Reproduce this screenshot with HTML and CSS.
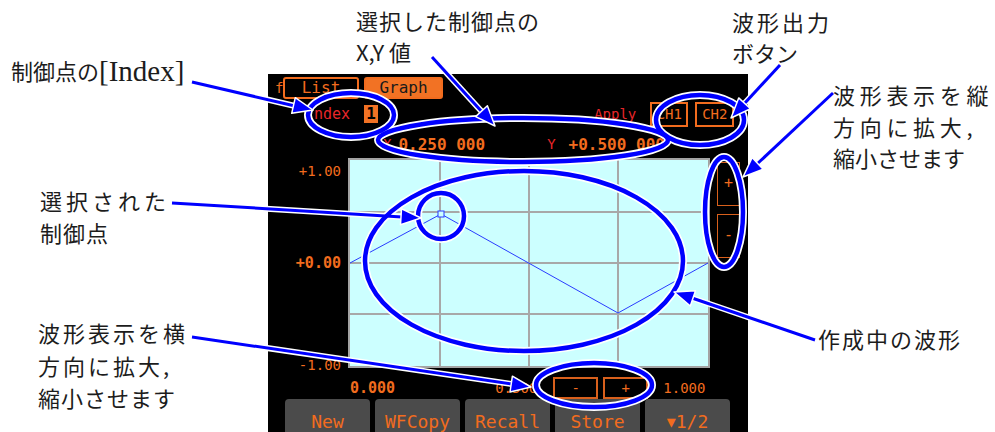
FILE: index.html
```html
<!DOCTYPE html>
<html lang="ja">
<head>
  <meta charset="UTF-8">
  <title>任意波形の編集 - Graph</title>
  <link rel="stylesheet" href="styles.css">
</head>
<body>

  <div class="page">

    <div class="screen">
      <div class="tabs">
        <span class="tab-edge">f</span>
        <span class="tab">List</span>
        <span class="tab active">Graph</span>
      </div>

      <div class="index-row">
        <span class="red idx-lbl">Index</span>
        <span class="idx-box">1</span>
        <span class="red apply">Apply</span>
        <span class="ch ch1">CH1</span>
        <span class="ch ch2">CH2</span>
      </div>

      <div class="values">
        <span class="red x-lbl">X</span>
        <span class="val x-val">0.250 000</span>
        <span class="red y-lbl">Y</span>
        <span class="val y-val">+0.500 000</span>
      </div>

      <div class="plot-row">
        <div class="yaxis">
          <span class="y-top">+1.00</span>
          <span class="y-mid">+0.00</span>
          <span class="y-bot">-1.00</span>
        </div>
        <div class="plot">
          <svg width="358" height="206" viewBox="0 0 358 206">
            <g class="grid">
              <line x1="90" y1="0" x2="90" y2="206"/>
              <line x1="179" y1="0" x2="179" y2="206"/>
              <line x1="268" y1="0" x2="268" y2="206"/>
              <line x1="0" y1="52" x2="358" y2="52"/>
              <line x1="0" y1="103" x2="358" y2="103"/>
              <line x1="0" y1="154" x2="358" y2="154"/>
            </g>
            <polyline class="wave" points="0,103 91,54 268,153 358,103"/>
            <rect class="point" x="88" y="51" width="6" height="6"/>
          </svg>
        </div>
        <div class="zoom-v">
          <span class="zbtn">+</span>
          <span class="zbtn">-</span>
        </div>
      </div>

      <div class="xaxis">
        <span class="x-start">0.000</span>
        <span class="x-mid">0.500</span>
        <span class="hbtn minus">-</span>
        <span class="hbtn plus">+</span>
        <span class="x-end">1.000</span>
      </div>

      <div class="softkeys">
        <span class="key">New</span>
        <span class="key">WFCopy</span>
        <span class="key">Recall</span>
        <span class="key">Store</span>
        <span class="key"><small>&#9660;</small>1/2</span>
      </div>
    </div>

    <!-- callout labels -->
    <div class="note n-index">制御点の<span class="serif">[Index]</span></div>
    <div class="note n-xy"><span class="sp1">選択した制御点の</span><br>X,Y 値</div>
    <div class="note n-out"><span class="sp3">波形出力</span><br>ボタン</div>
    <div class="note n-vert"><span class="sp5">波形表示を縦</span><br><span class="sp5">方向に拡大,</span><br>縮小させます</div>
    <div class="note n-sel"><span class="sp4">選択された</span><br><span class="sp1">制御点</span></div>
    <div class="note n-wave"><span class="sp2">作成中の波形</span></div>
    <div class="note n-horz"><span class="sp3">波形表示を横</span><br><span class="sp3">方向に拡大,</span><br><span class="sp1">縮小させます</span></div>

    <!-- rings and arrows drawn over the screen -->
    <svg class="marks" width="995" height="432" viewBox="0 0 995 432">
      <defs>
        <g id="rings">
          <ellipse cx="351" cy="115" rx="43" ry="22"/>
          <ellipse cx="523" cy="140" rx="145" ry="22"/>
          <ellipse cx="700" cy="120" rx="44" ry="25"/>
          <ellipse cx="724" cy="212" rx="19" ry="55"/>
          <ellipse cx="524" cy="261" rx="159" ry="90"/>
          <circle cx="441" cy="216" r="23"/>
          <ellipse cx="594" cy="385" rx="58" ry="22"/>
        </g>
        <g id="leads">
          <line x1="192" y1="82" x2="295" y2="106"/>
          <line x1="432" y1="57" x2="483" y2="113"/>
          <line x1="780" y1="65" x2="744" y2="104"/>
          <line x1="833" y1="93" x2="757" y2="164"/>
          <line x1="172" y1="203" x2="402" y2="217"/>
          <line x1="815" y1="340" x2="692" y2="298"/>
          <line x1="192" y1="337" x2="512" y2="384"/>
        </g>
      </defs>
      <use href="#rings" class="ring-halo"/>
      <use href="#leads" class="lead-halo"/>
      <use href="#rings" class="ring"/>
      <use href="#leads" class="lead"/>
      <g class="heads">
        <polygon points="313,110 291.7,113.3 295.3,97.7"/>
        <polygon points="495,126 475.6,116.6 487.4,105.8"/>
        <polygon points="731,118 738.7,97.9 750.5,108.7"/>
        <polygon points="743,177 752.1,157.6 763.1,169.2"/>
        <polygon points="421,218 400.5,224.8 401.5,208.8"/>
        <polygon points="674,292 695.5,290.8 690.3,306"/>
        <polygon points="531,387 510,392 512.4,376.2"/>
      </g>
    </svg>

  </div>

</body>
</html>
```

FILE: styles.css
```css
body {
  margin: 0;
  background-color: #ffffff;
}
.page {
  position: relative;
  width: 995px;
  height: 432px;
  overflow: hidden;
  background-color: #ffffff;
}

/* ---- instrument screen ---- */
.screen {
  margin-left: 268px;
  padding-top: 74px;
  width: 480px;
  height: 358px;
  box-sizing: content-box;
  font-family: "DejaVu Sans Mono", "Liberation Mono", monospace;
  color: #f26c1e;
  background: linear-gradient(#ffffff 0, #ffffff 74px, #000000 74px);
}
.red {
  color: #e8262a;
}

.tabs {
  display: flex;
  align-items: center;
  height: 25px;
  padding-top: 3px;
  box-sizing: border-box;
}
.tab-edge {
  width: 15px;
  padding-left: 7px;
  box-sizing: border-box;
  font-size: 14px;
  line-height: 18px;
}
.tab {
  height: 22px;
  width: 76px;
  box-sizing: border-box;
  border: 2px solid #f26c1e;
  border-radius: 3px;
  font-size: 16px;
  line-height: 18px;
  text-align: center;
}
.tab.active {
  width: 79px;
  margin-left: 5px;
  background-color: #f27224;
  color: #1a1a1a;
}

.index-row {
  display: flex;
  align-items: center;
  height: 29px;
  padding-top: 1px;
  box-sizing: border-box;
}
.idx-lbl {
  margin-left: 37px;
  font-size: 15px;
}
.idx-box {
  margin-left: 14px;
  width: 14px;
  height: 18px;
  background-color: #f27224;
  color: #000000;
  font-size: 16px;
  font-weight: bold;
  line-height: 18px;
  text-align: center;
}
.apply {
  margin-left: 216px;
  font-size: 14px;
}
.ch {
  height: 25px;
  width: 38px;
  box-sizing: border-box;
  border: 2px solid #f26c1e;
  font-size: 14px;
  line-height: 21px;
  text-align: center;
}
.ch1 {
  margin-left: 14px;
}
.ch2 {
  margin-left: 7px;
  width: 39px;
}

.values {
  display: flex;
  align-items: center;
  height: 30px;
  padding-top: 2px;
  box-sizing: border-box;
}
.val {
  font-size: 16px;
  font-weight: bold;
}
.x-lbl, .y-lbl {
  font-size: 14px;
}
.x-lbl {
  margin-left: 115px;
}
.x-val {
  margin-left: 7px;
}
.y-lbl {
  margin-left: 62px;
}
.y-val {
  margin-left: 13px;
}

.plot-row {
  display: flex;
  height: 218px;
}
.yaxis {
  width: 80px;
  height: 210px;
  padding-right: 7px;
  box-sizing: border-box;
  display: flex;
  flex-direction: column;
  align-items: flex-end;
  font-size: 14px;
  line-height: 16px;
}
.y-top {
  margin-top: 5px;
}
.y-mid {
  margin-top: 76px;
  font-weight: bold;
  font-size: 15px;
}
.y-bot {
  margin-top: 86px;
}
.plot {
  width: 362px;
  height: 210px;
  box-sizing: border-box;
  border: 2px solid #a3a3a3;
  background-color: #ccffff;
}
.plot svg {
  display: block;
}
.grid line {
  stroke: #a8a8a8;
  stroke-width: 2;
}
.wave {
  fill: none;
  stroke: #2a3cff;
  stroke-width: 1;
}
.point {
  fill: #ccffff;
  stroke: #2a3cff;
  stroke-width: 1;
}
.zoom-v {
  margin-left: 7px;
  padding-top: 4px;
  display: flex;
  flex-direction: column;
  gap: 8px;
}
.zbtn {
  width: 23px;
  height: 44px;
  box-sizing: border-box;
  border: 1px solid #d9601c;
  font-size: 15px;
  line-height: 40px;
  text-align: center;
}

.xaxis {
  display: flex;
  align-items: center;
  height: 23px;
  font-size: 14px;
}
.x-start {
  margin-left: 82px;
  font-size: 15px;
  font-weight: bold;
}
.x-mid {
  margin-left: 100px;
}
.hbtn {
  width: 45px;
  height: 22px;
  box-sizing: border-box;
  border: 2px solid #d9601c;
  line-height: 18px;
  text-align: center;
}
.minus {
  margin-left: 16px;
}
.plus {
  margin-left: 5px;
}
.x-end {
  margin-left: 15px;
}

.softkeys {
  display: flex;
  gap: 5px;
  padding-left: 17px;
  height: 33px;
}
.key {
  flex: none;
  width: 85px;
  height: 33px;
  box-sizing: border-box;
  padding-top: 13px;
  border-radius: 4px 4px 0 0;
  background-color: #4b4b4b;
  font-size: 18px;
  line-height: 19px;
  text-align: center;
}
.key small {
  font-size: 15px;
  vertical-align: 1px;
}

/* ---- callouts ---- */
.note {
  position: absolute;
  font-family: "Noto Sans CJK JP", sans-serif;
  font-size: 22px;
  line-height: 31px;
  color: #1c1c1c;
  white-space: nowrap;
}
.serif {
  font-family: "Liberation Serif", serif;
  font-size: 29px;
  vertical-align: -1px;
}
.sp1 { letter-spacing: 1px; }
.sp2 { letter-spacing: 2px; }
.sp3 { letter-spacing: 3px; }
.sp4 { letter-spacing: 4px; }
.sp5 { letter-spacing: 4.7px; }

.n-index { left: 11px; top: 55px; }
.n-xy { left: 356px; top: 5px; }
.n-out { left: 732px; top: 6px; }
.n-vert { left: 833px; top: 79px; line-height: 31.5px; }
.n-sel { left: 40px; top: 184px; line-height: 32px; }
.n-wave { left: 818px; top: 323px; }
.n-horz { left: 38px; top: 316px; line-height: 32.5px; }

.marks {
  position: absolute;
  left: 0;
  top: 0;
  pointer-events: none;
}
.ring-halo {
  fill: none;
  stroke: #ffffff;
  stroke-width: 8;
}
.ring {
  fill: none;
  stroke: #0000ff;
  stroke-width: 4.5;
}
.lead-halo {
  stroke: #ffffff;
  stroke-width: 6;
}
.lead {
  stroke: #0000ff;
  stroke-width: 3;
}
.heads polygon {
  fill: #0000ff;
  stroke: #ffffff;
  stroke-width: 1.5;
  stroke-linejoin: round;
}
```
